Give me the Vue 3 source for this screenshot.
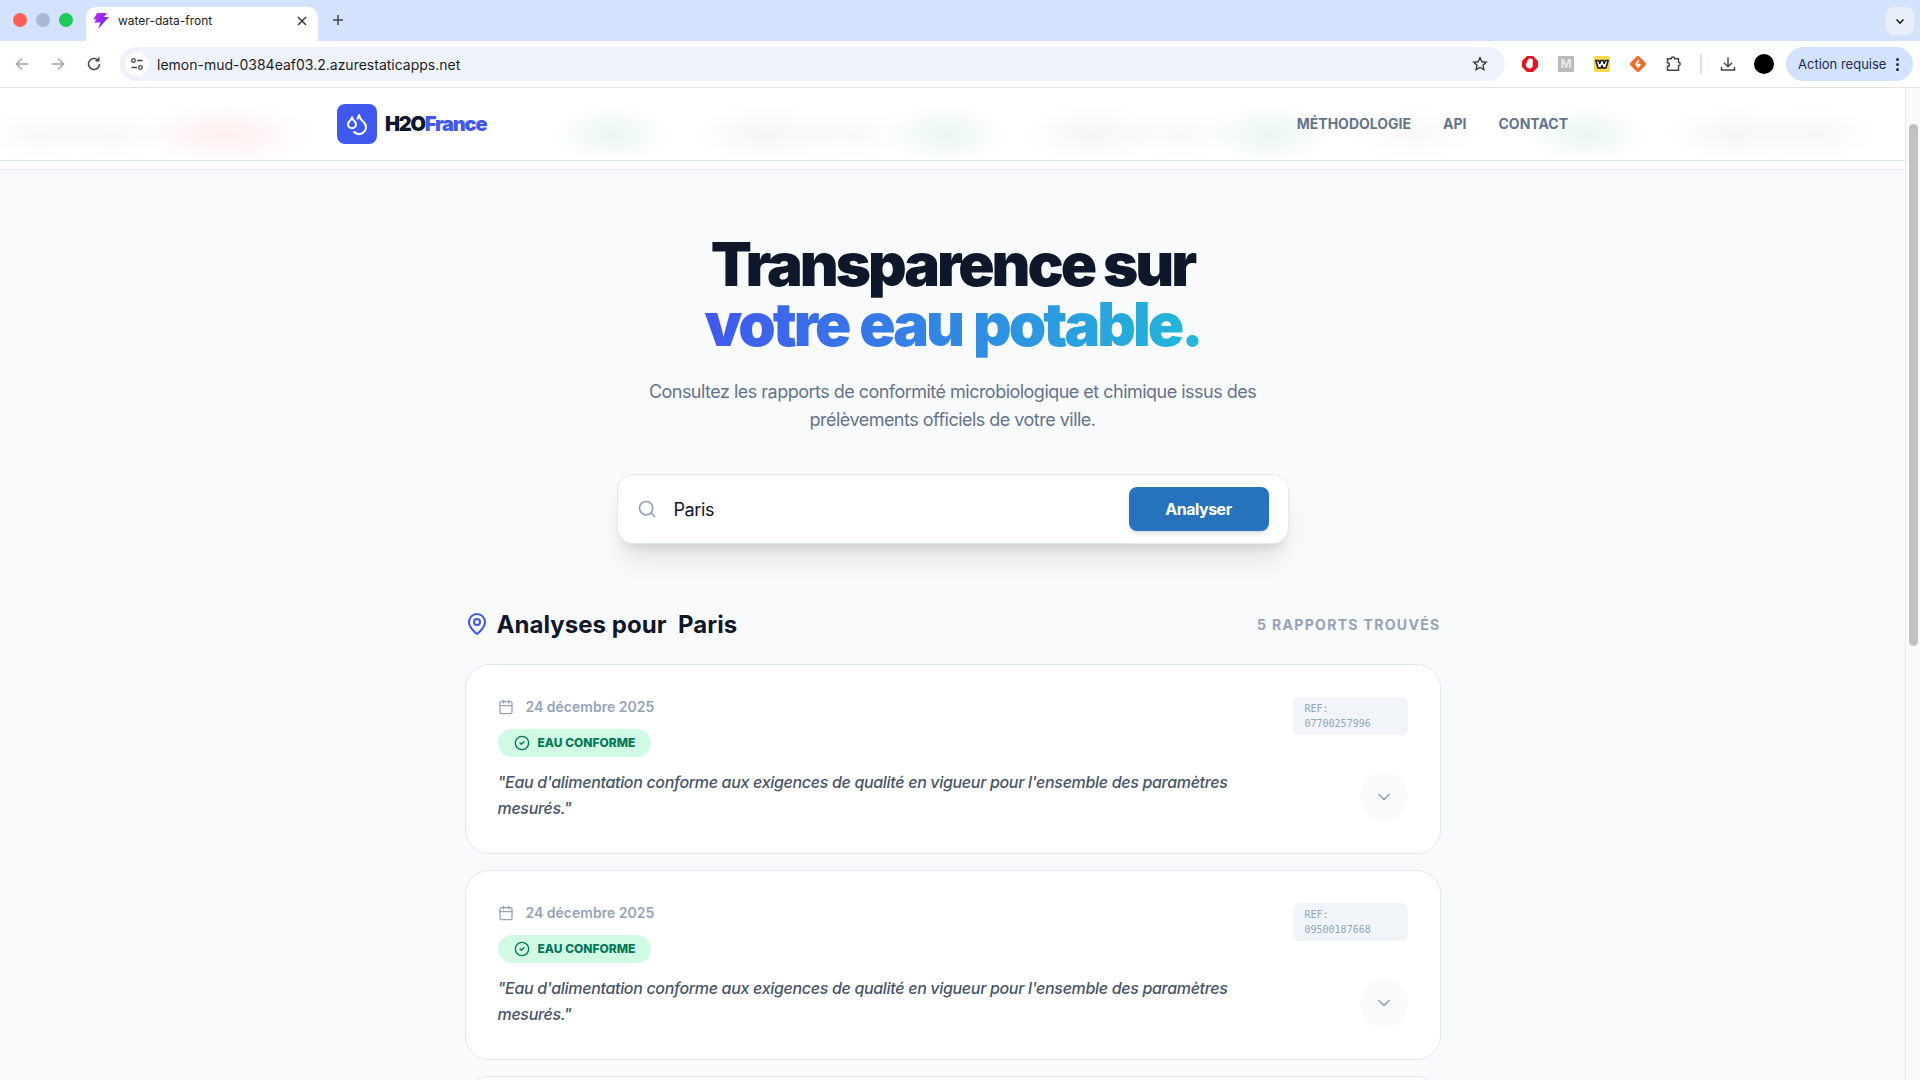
<template>
  <div class="screen">
    <!-- Browser: Tab-Leiste -->
    <div class="tabstrip">
      <div class="lights">
        <span class="light red"></span>
        <span class="light grey"></span>
        <span class="light green"></span>
      </div>
      <div class="tab">
        <svg class="favicon" viewBox="0 0 18 18" width="18" height="18">
          <defs>
            <linearGradient id="bolt" x1="0" y1="0" x2="1" y2="1">
              <stop offset="0" stop-color="#c026f3" />
              <stop offset="1" stop-color="#5b2ff0" />
            </linearGradient>
          </defs>
          <path fill="url(#bolt)" d="M5 1h10l-3 4h5L6 17l2.500-6.500H2l2.500-3H1.500z" />
        </svg>
        <span class="tab-title">water-data-front</span>
        <svg class="tab-close" viewBox="0 0 12 12" width="12" height="12">
          <path d="M2 2l8 8M10 2l-8 8" />
        </svg>
      </div>
      <svg class="tab-new" viewBox="0 0 14 14" width="14" height="14">
        <path d="M7 2v10M2 7h10" />
      </svg>
      <div class="tab-list">
        <svg viewBox="0 0 12 12" width="12" height="12">
          <path d="M2.500 4.500L6 8l3.500-3.500" />
        </svg>
      </div>
    </div>

    <!-- Browser: Adressleiste -->
    <div class="toolbar">
      <svg class="tool dim" viewBox="0 0 16 16" width="16" height="16">
        <path d="M14 8H2.500M8 2.500L2.500 8 8 13.500" />
      </svg>
      <svg class="tool dim" viewBox="0 0 16 16" width="16" height="16">
        <path d="M2 8h11.500M8 2.500L13.500 8 8 13.500" />
      </svg>
      <svg class="tool" viewBox="0 0 16 16" width="16" height="16">
        <path d="M13.500 8A5.500 5.500 0 1 1 11.800 4M12.800 1.500v3.300H9.500" />
      </svg>
      <div class="omnibox">
        <span class="site-info">
          <svg viewBox="0 0 14 14" width="14" height="14">
            <circle cx="3.500" cy="3.500" r="1.800" />
            <path d="M7 3.500h5.500M1.500 10.500H7" />
            <circle cx="10.500" cy="10.500" r="1.800" />
          </svg>
        </span>
        <span class="url">lemon-mud-0384eaf03.2.azurestaticapps.net</span>
        <svg class="star" viewBox="0 0 16 16" width="16" height="16">
          <path d="M8 1.800l1.900 4 4.300.5-3.200 3 .9 4.300L8 11.500l-3.900 2.100.9-4.300-3.200-3 4.300-.5z" />
        </svg>
      </div>
      <div class="extensions">
        <svg viewBox="0 0 16 16" width="16" height="16">
          <path fill="#e5141f" d="M5 0h6l5 5v6l-5 5H5l-5-5V5z" />
          <path fill="#fff" d="M5 7.500V4.500a.8.800 0 0 1 1.300-.2V3a.8.800 0 0 1 1.500 0v-.300a.8.800 0 0 1 1.500 0V3.500a.8.800 0 0 1 1.500 0V9a3.500 3.500 0 0 1-3.500 3.500c-1.500 0-2.300-.7-3-2L3.700 8.300c-.4-.9.800-1.500 1.300-.8z" />
        </svg>
        <span class="ext-m">M</span>
        <svg viewBox="0 0 16 16" width="16" height="16">
          <rect width="16" height="16" rx="2" fill="#f5d94a" />
          <path fill="#fff" stroke="#1c1c1c" stroke-width="1.600" stroke-linejoin="round" d="M1.800 4.500h3l1 3 1-3h2.400l1 3 1-3h3l-2.300 7.500h-3L8 9.500 7.100 12h-3z" />
        </svg>
        <svg viewBox="0 0 16 16" width="16" height="16">
          <path fill="#f26a2c" d="M6.600.600a2 2 0 0 1 2.800 0l6 6a2 2 0 0 1 0 2.800l-6 6a2 2 0 0 1-2.800 0l-6-6a2 2 0 0 1 0-2.800z" />
          <path fill="#fff" d="M8.500 3.500L5 8l3 4.500L11 8.500 9.200 7.300 8 8.600 7.200 8l2.300-3.200z" />
        </svg>
        <svg class="tool" viewBox="0 0 16 16" width="16" height="16">
          <path d="M1.500 2.800h3.800a1.700 1.700 0 0 1 3.400 0h3.800v3.500a1.700 1.700 0 0 1 0 3.400v4.500H1.500V10.500a1.900 1.900 0 0 0 0-3.800z" />
        </svg>
      </div>
      <span class="sep"></span>
      <svg class="tool" viewBox="0 0 16 16" width="16" height="16">
        <path d="M8 1.500v9M4 6.800L8 10.800l4-4M1.500 11v3h13v-3" />
      </svg>
      <span class="avatar"></span>
      <div class="action-pill">
        <span>Action requise</span>
        <span class="dots"><i></i><i></i><i></i></span>
      </div>
    </div>

    <!-- Seite mit Scrollbar -->
    <div class="viewport">
      <div class="page">
        <header class="navbar">
          <div class="nav-inner">
            <div class="brand">
              <span class="brand-icon">
                <svg viewBox="0 0 24 24" width="24" height="24">
                  <path d="M7 16.300c2.200 0 4-1.830 4-4.050 0-1.160-.57-2.260-1.710-3.190S7.290 6.750 7 5.300c-.29 1.450-1.140 2.840-2.290 3.760S3 11.100 3 12.250c0 2.220 1.800 4.050 4 4.050z" />
                  <path d="M12.560 6.600A10.970 10.970 0 0 0 14 3.020c.5 2.500 2 4.900 4 6.500s3 3.500 3 5.500a6.980 6.980 0 0 1-11.910 4.970" />
                </svg>
              </span>
              <span class="brand-name">H2O<span class="brand-accent">France</span></span>
            </div>
            <nav class="nav-links">
              <a>MÉTHODOLOGIE</a>
              <a>API</a>
              <a>CONTACT</a>
            </nav>
          </div>
        </header>
        <div class="nav-gap"></div>

        <main class="content">
          <section class="hero">
            <h1>Transparence sur<br /><span class="gradient">votre eau potable.</span></h1>
            <p>Consultez les rapports de conformité microbiologique et chimique issus des prélèvements officiels de votre ville.</p>
            <div class="searchbox">
              <svg class="search-icon" viewBox="0 0 24 24" width="20" height="20">
                <circle cx="11" cy="11" r="8" />
                <path d="M21 21l-4.300-4.300" />
              </svg>
              <span class="search-value">Paris</span>
              <button class="search-btn">Analyser</button>
            </div>
          </section>

          <section class="results">
            <div class="results-head">
              <h2>
                <svg viewBox="0 0 24 24" width="24" height="24">
                  <path d="M20 10c0 6-8 12-8 12s-8-6-8-12a8 8 0 0 1 16 0z" />
                  <circle cx="12" cy="10" r="3" />
                </svg>
                <span class="h2-text">Analyses pour&nbsp;&nbsp;Paris</span>
              </h2>
              <span class="count">{{ reports.length }} RAPPORTS TROUVÉS</span>
            </div>

            <article v-for="report in reports" :key="report.ref" class="card">
              <div class="card-main">
                <div class="date">
                  <svg viewBox="0 0 24 24" width="16" height="16">
                    <path d="M8 2v4M16 2v4" />
                    <rect x="3" y="4" width="18" height="18" rx="2" />
                    <path d="M3 10h18" />
                  </svg>
                  <span class="date-text">{{ report.date }}</span>
                </div>
                <span class="badge">
                  <svg viewBox="0 0 24 24" width="16" height="16">
                    <circle cx="12" cy="12" r="10" />
                    <path d="M9 12l2 2 4-4" />
                  </svg>
                  <span class="badge-text">EAU CONFORME</span>
                </span>
                <p class="quote">{{ report.text }}</p>
              </div>
              <div class="card-side">
                <code class="ref">REF: {{ report.ref }}</code>
                <button class="expand">
                  <svg viewBox="0 0 24 24" width="20" height="20">
                    <path d="M6 9l6 6 6-6" />
                  </svg>
                </button>
              </div>
            </article>
          </section>
        </main>
      </div>

      <div class="scrollbar">
        <span class="thumb"></span>
      </div>
    </div>
  </div>
</template>

<script setup>
const conforme = `"Eau d'alimentation conforme aux exigences de qualité en vigueur pour l'ensemble des paramètres mesurés."`

// Rapports de la ville
const reports = [
  { ref: '07700257996', date: '24 décembre 2025', text: conforme },
  { ref: '09500187668', date: '24 décembre 2025', text: conforme },
  { ref: '07500214530', date: '23 décembre 2025', text: conforme },
  { ref: '07800196421', date: '22 décembre 2025', text: conforme },
  { ref: '09200173385', date: '22 décembre 2025', text: conforme },
]
</script>

<style>
html, body {
  margin: 0;
  overflow: hidden;
}
</style>

<style scoped>
.screen {
  width: 1920px;
  height: 1080px;
  overflow: hidden;
  display: flex;
  flex-direction: column;
  font-family: Inter, "Liberation Sans", sans-serif;
  background: #fff;
}

svg {
  display: block;
  flex: none;
}

/* Tab-Leiste */
.tabstrip {
  height: 41px;
  flex: none;
  display: flex;
  align-items: flex-end;
  background: #d3e3fd;
}

.lights {
  display: flex;
  gap: 9px;
  padding: 0 0 14px 13px;
  width: 73px;
  box-sizing: border-box;
}

.light {
  width: 14px;
  height: 14px;
  border-radius: 50%;
}

.light.red { background: #ff5f57; }
.light.grey { background: #aab8d4; }
.light.green { background: #20c95a; }

.tab {
  width: 232px;
  height: 34px;
  margin-left: 13px;
  box-sizing: border-box;
  padding: 0 10px 7px 6px;
  display: flex;
  align-items: center;
  background: #fff;
  border-radius: 10px 10px 0 0;
}

.tab-title {
  margin-left: 8px;
  flex: 1;
  font-size: 12px;
  color: #1f1f1f;
}

.tab-close path {
  fill: none;
  stroke: #3a3a3a;
  stroke-width: 1.5;
}

.tab-new {
  margin: 0 0 14px 13px;
}

.tab-new path {
  fill: none;
  stroke: #474747;
  stroke-width: 1.5;
}

.tab-list {
  margin: 0 6px 6px auto;
  width: 28px;
  height: 28px;
  border-radius: 8px;
  background: #e9f0fc;
  display: flex;
  align-items: center;
  justify-content: center;
}

.tab-list path {
  fill: none;
  stroke: #1f1f1f;
  stroke-width: 1.6;
}

/* Adressleiste */
.toolbar {
  height: 47px;
  flex: none;
  display: flex;
  align-items: center;
  box-sizing: border-box;
  padding: 0 7px 0 14px;
  background: #fff;
  border-bottom: 1px solid #e3e3e3;
}

.tool {
  margin-right: 20px;
}

.tool path {
  fill: none;
  stroke: #474747;
  stroke-width: 1.5;
}

.tool.dim path {
  stroke: #a3a3a3;
}

.omnibox {
  width: 1385px;
  height: 34px;
  margin-left: -2px;
  box-sizing: border-box;
  padding: 0 17px 0 5px;
  display: flex;
  align-items: center;
  background: #eef2fb;
  border-radius: 17px;
}

.site-info {
  width: 24px;
  height: 24px;
  border-radius: 50%;
  background: #fff;
  display: flex;
  align-items: center;
  justify-content: center;
}

.site-info svg * {
  fill: none;
  stroke: #474747;
  stroke-width: 1.3;
}

.url {
  flex: 1;
  margin-left: 8px;
  font-size: 14px;
  color: #1f1f1f;
}

.star path {
  fill: none;
  stroke: #3a3a3a;
  stroke-width: 1.4;
}

.extensions {
  display: flex;
  align-items: center;
  gap: 20px;
  margin-left: 17px;
}

.extensions .tool {
  margin-right: 0;
}

.ext-m {
  width: 16px;
  height: 16px;
  background: #b9b9b9;
  color: #e8e8e8;
  font-size: 12px;
  font-weight: 700;
  line-height: 16px;
  text-align: center;
  border-radius: 1px;
}

.sep {
  width: 2px;
  height: 20px;
  background: #d3e3fd;
  margin: 0 18px 0 18px;
}

.avatar {
  width: 20px;
  height: 20px;
  border-radius: 50%;
  background: #000;
  margin-right: 12px;
  margin-left: -2px;
}

.action-pill {
  width: 127px;
  height: 34px;
  box-sizing: border-box;
  padding: 0 14px 0 12px;
  display: flex;
  align-items: center;
  justify-content: space-between;
  background: #d3e3fd;
  border-radius: 17px;
  font-size: 13px;
  color: #1c2b4a;
}

.dots {
  display: flex;
  flex-direction: column;
  gap: 2px;
}

.dots i {
  width: 3px;
  height: 3px;
  border-radius: 50%;
  background: #1c2b4a;
}

/* Seite */
.viewport {
  flex: 1;
  min-height: 0;
  display: flex;
}

.page {
  flex: 1;
  min-width: 0;
  background: #f8fafc;
}

.navbar {
  height: 72px;
  border-bottom: 1px solid #e2e8f0;
  background-color: #fff;
  background-image:
    radial-gradient(ellipse 90px 32px at 225px 46px, rgba(240, 60, 50, 0.08), transparent),
    radial-gradient(ellipse 60px 26px at 40px 46px, rgba(100, 100, 100, 0.045), transparent),
    radial-gradient(ellipse 60px 26px at 112px 46px, rgba(100, 100, 100, 0.045), transparent),
    radial-gradient(ellipse 60px 28px at 612px 46px, rgba(40, 170, 90, 0.1), transparent),
    radial-gradient(ellipse 75px 30px at 766px 46px, rgba(100, 100, 100, 0.06), transparent),
    radial-gradient(ellipse 60px 26px at 852px 46px, rgba(100, 100, 150, 0.04), transparent),
    radial-gradient(ellipse 62px 30px at 946px 46px, rgba(40, 170, 90, 0.1), transparent),
    radial-gradient(ellipse 70px 30px at 1093px 46px, rgba(100, 100, 100, 0.06), transparent),
    radial-gradient(ellipse 60px 26px at 1180px 46px, rgba(100, 100, 100, 0.04), transparent),
    radial-gradient(ellipse 62px 30px at 1270px 46px, rgba(40, 170, 90, 0.1), transparent),
    radial-gradient(ellipse 65px 28px at 1415px 46px, rgba(100, 100, 100, 0.04), transparent),
    radial-gradient(ellipse 62px 28px at 1586px 46px, rgba(40, 170, 90, 0.1), transparent),
    radial-gradient(ellipse 70px 28px at 1735px 46px, rgba(100, 100, 100, 0.06), transparent),
    radial-gradient(ellipse 60px 28px at 1815px 46px, rgba(100, 100, 100, 0.05), transparent);
}

.nav-inner {
  width: 1231px;
  height: 72px;
  margin: 0 auto;
  display: flex;
  align-items: center;
  justify-content: space-between;
}

.brand {
  display: flex;
  align-items: center;
  gap: 8px;
}

.brand-icon {
  width: 40px;
  height: 40px;
  border-radius: 8px;
  background: #4158ee;
  display: flex;
  align-items: center;
  justify-content: center;
}

.brand-icon path {
  fill: none;
  stroke: #fff;
  stroke-width: 2;
  stroke-linecap: round;
  stroke-linejoin: round;
}

.brand-name {
  font-size: 20px;
  font-weight: 900;
  letter-spacing: -0.06em;
  color: #0f172a;
}

.brand-accent {
  color: #4158ee;
}

.nav-links {
  display: flex;
  gap: 32px;
  font-size: 14px;
  font-weight: 700;
  line-height: 16px;
  padding-bottom: 1px;
  color: #64748b;
}

.nav-gap {
  height: 8px;
  background: #fff;
  border-bottom: 1px solid #e2e8f0;
}

.content {
  width: 976px;
  margin: 0 auto;
  padding-top: 64px;
}

/* Hero */
.hero {
  display: flex;
  flex-direction: column;
  align-items: center;
}

h1 {
  margin: 0;
  font-size: 60px;
  line-height: 60px;
  font-weight: 900;
  letter-spacing: -0.05em;
  text-align: center;
  color: #0f172a;
}

.gradient {
  background: linear-gradient(to right, #4158ee, #22b8d8);
  -webkit-background-clip: text;
  background-clip: text;
  color: transparent;
  word-spacing: 2px;
}

.hero p {
  width: 672px;
  margin: 24px 0 40px;
  font-size: 18px;
  line-height: 28px;
  letter-spacing: -0.52px;
  text-align: center;
  color: #64748b;
}

.searchbox {
  width: 672px;
  height: 70px;
  box-sizing: border-box;
  padding: 12px 19px 12px 19px;
  display: flex;
  align-items: center;
  background: #fff;
  border: 1px solid #e2e8f0;
  border-radius: 16px;
  box-shadow: 0 20px 25px -5px rgba(0, 0, 0, 0.1), 0 8px 10px -6px rgba(0, 0, 0, 0.1);
}

.search-icon {
  fill: none;
  stroke: #94a3b8;
  stroke-width: 2;
  stroke-linecap: round;
}

.search-value {
  flex: 1;
  margin-left: 17px;
  font-size: 18px;
  font-weight: 400;
  letter-spacing: -0.4px;
  color: #0f172a;
}

.search-btn {
  width: 140px;
  height: 44px;
  border: none;
  border-radius: 8px;
  background: #2672bd;
  color: #fff;
  font-family: inherit;
  font-size: 16px;
  font-weight: 700;
  letter-spacing: -0.5px;
  box-shadow: 0 4px 6px -1px rgba(0, 0, 0, 0.1), 0 2px 4px -2px rgba(0, 0, 0, 0.1);
}

/* Ergebnisse */
.results {
  margin-top: 64px;
}

.results-head {
  display: flex;
  align-items: center;
  justify-content: space-between;
  height: 32px;
  margin-bottom: 24px;
}

h2 {
  margin: 0;
  display: flex;
  align-items: center;
  gap: 8px;
  font-size: 24px;
  line-height: 32px;
  font-weight: 700;
  color: #0f172a;
}

h2 svg {
  fill: none;
  stroke: #4158ee;
  stroke-width: 2;
  stroke-linecap: round;
  stroke-linejoin: round;
}

.h2-text {
  letter-spacing: 0.05px;
  margin-top: 1px;
  margin-bottom: -1px;
}

.count {
  font-size: 14px;
  font-weight: 700;
  letter-spacing: 0.095em;
  color: #94a3b8;
}

.card {
  box-sizing: border-box;
  height: 190px;
  margin-bottom: 16px;
  padding: 32px;
  display: flex;
  justify-content: space-between;
  background: #fff;
  border: 1px solid #e2e8f0;
  border-radius: 24px;
}

.date {
  display: flex;
  align-items: center;
  gap: 12px;
  height: 20px;
  font-size: 14px;
  font-weight: 600;
  color: #94a3b8;
}

.date-text {
  margin-top: -2px;
}

.date svg {
  fill: none;
  stroke: #94a3b8;
  stroke-width: 2;
  stroke-linecap: round;
  stroke-linejoin: round;
}

.badge {
  display: inline-flex;
  align-items: center;
  gap: 8px;
  height: 28px;
  margin-top: 12px;
  padding: 0 16px;
  border-radius: 14px;
  background: #d1fae5;
  color: #047857;
  font-size: 12px;
  font-weight: 800;
}

.badge-text {
  margin-top: -2px;
}

.badge svg {
  fill: none;
  stroke: #047857;
  stroke-width: 2;
  stroke-linecap: round;
  stroke-linejoin: round;
}

.quote {
  width: 768px;
  margin: 12px 0 0;
  font-size: 16px;
  line-height: 26px;
  font-style: italic;
  font-weight: 500;
  letter-spacing: -0.325px;
  color: #475569;
}

.card-side {
  display: flex;
  flex-direction: column;
  align-items: flex-end;
  justify-content: space-between;
}

.ref {
  width: 115px;
  box-sizing: border-box;
  padding: 4px 12px;
  border-radius: 6px;
  background: #f1f5f9;
  font-family: "DejaVu Sans Mono", monospace;
  font-size: 10px;
  line-height: 15px;
  color: #94a3b8;
}

.expand {
  width: 48px;
  height: 48px;
  border: none;
  border-radius: 50%;
  background: #f8fafc;
  display: flex;
  align-items: center;
  justify-content: center;
}

.expand svg {
  fill: none;
  stroke: #94a3b8;
  stroke-width: 2;
  stroke-linecap: round;
  stroke-linejoin: round;
}

/* Scrollbar */
.scrollbar {
  width: 15px;
  flex: none;
  box-sizing: border-box;
  padding: 36px 2px 0 3px;
  background: #fafafa;
  border-left: 1px solid #e8e8e8;
}

.thumb {
  display: block;
  height: 522px;
  border-radius: 5px;
  background: #c1c1c1;
}
</style>
